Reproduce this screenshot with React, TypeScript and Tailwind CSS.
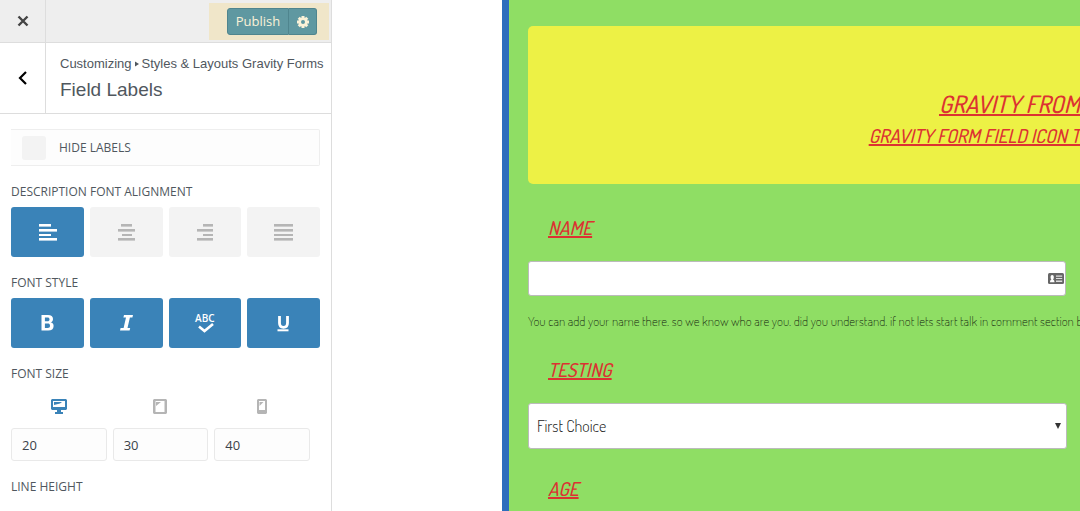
import React from "react";

const narrow = "font-['Dosis','Roboto_Condensed','Open_Sans_Condensed','Noto_Sans_Condensed',Lato,sans-serif]";

function AlignIcon({ rows }: { rows: [number, number][] }) {
  return (
    <svg width="20" height="18" viewBox="0 0 20 18" fill="currentColor" aria-hidden="true">
      {rows.map(([x, w], i) => (
        <rect key={i} x={x} y={[1, 6, 11, 15][i]} width={w} height={i === 2 ? 2 : 2.6} />
      ))}
    </svg>
  );
}

const alignments: { name: string; rows: [number, number][] }[] = [
  { name: "Left", rows: [[2, 12], [2, 18], [2, 12], [2, 18]] },
  { name: "Center", rows: [[5, 11], [2, 17], [6, 10], [2, 17]] },
  { name: "Right", rows: [[8, 10], [2, 16], [8, 10], [2, 16]] },
  { name: "Justify", rows: [[0, 19], [0, 19], [0, 19], [0, 19]] },
];

function BoldIcon() {
  return (
    <svg width="20" height="20" viewBox="0 0 20 20" fill="currentColor" fillRule="evenodd" aria-hidden="true">
      <path d="M4.500 2H11c3.200 0 5 1.400 5 3.900 0 1.800-.9 2.900-2.400 3.400 1.900.4 3 1.700 3 3.700 0 3-2 4.600-5.400 4.600H4.500zm3.400 2.600v3.600h2.500c1.400 0 2.100-.6 2.100-1.800s-.7-1.800-2.200-1.800zm0 6v4.300h2.800c1.500 0 2.300-.7 2.300-2.200s-.8-2.100-2.400-2.100z" />
    </svg>
  );
}

function ItalicIcon() {
  return (
    <svg width="20" height="20" viewBox="0 0 20 20" fill="currentColor" aria-hidden="true">
      <path d="M8 2h9l-.6 2.600h-2.500L11.500 15h2.700l-.6 2.600H4L4.600 15h3L10 4.600H7.400z" />
    </svg>
  );
}

function SpellIcon() {
  return (
    <span className="flex flex-col items-center">
      <span className="text-[10px] leading-[10px] font-semibold">ABC</span>
      <svg width="18" height="10" viewBox="0 0 18 10" fill="none" stroke="currentColor" strokeWidth="2.600" aria-hidden="true">
        <path d="M3 3.500l5.500 4.500L17 1" />
      </svg>
    </span>
  );
}

function UnderlineIcon() {
  return (
    <svg width="20" height="20" viewBox="0 0 20 20" aria-hidden="true">
      <path d="M5.500 3v7c0 3 1.300 4.300 4 4.300s4-1.300 4-4.300V3" fill="none" stroke="currentColor" strokeWidth="2.800" />
      <path d="M3.500 16.300h11v2h-11z" fill="currentColor" />
    </svg>
  );
}

function DesktopIcon() {
  return (
    <svg width="16" height="15" viewBox="0 0 16 15" fill="currentColor" aria-hidden="true">
      <path fillRule="evenodd" d="M1 0h14l1 1v9l-1 1h-5v2h2v2H4v-2h2v-2H1l-1-1V1zM2 2v6h12V2z" />
      <path d="M3 3h8L9 4.500 3 6z" />
    </svg>
  );
}

function TabletIcon() {
  return (
    <svg width="14" height="15" viewBox="0 0 14 15" fill="currentColor" aria-hidden="true">
      <path fillRule="evenodd" d="M1 0h12l1 1v13l-1 1H1l-1-1V1zM2.500 2v11h9V2z" />
      <path d="M3 3h5L3 7z" />
    </svg>
  );
}

function PhoneIcon() {
  return (
    <svg width="10" height="15" viewBox="0 0 10 15" fill="currentColor" aria-hidden="true">
      <path fillRule="evenodd" d="M1 0h8l1 1v13l-1 1H1l-1-1V1zM2 2v9h6V2z" />
      <path d="M2.500 3h4l-4 4z" />
    </svg>
  );
}

function GearIcon() {
  return (
    <svg width="14" height="14" viewBox="0 0 14 14" aria-hidden="true">
      <g fill="currentColor">
        {[0, 45, 90, 135].map((a) => (
          <rect key={a} x="5.500" y="1" width="3" height="12" transform={`rotate(${a} 7 7)`} />
        ))}
        <circle cx="7" cy="7" r="4.600" />
      </g>
      <circle cx="7" cy="7" r="2" className="fill-[#5f98a1]" />
    </svg>
  );
}

function CardIcon() {
  return (
    <svg width="16" height="11" viewBox="0 0 16 11" aria-hidden="true">
      <rect width="16" height="11" rx="1.500" fill="#666" />
      <path d="M2 9.200c0-1.600.8-2.400 1.500-2.600C2.700 6 2.600 5 2.600 4c0-1.200.6-2 1.600-2s1.600.8 1.600 2c0 1-.1 2-.9 2.600.8.2 1.600 1 1.600 2.600z" fill="#fff" />
      <path d="M8 2.500h6.200v1.300H8zM8 5.100h6.200v1H8zM8 7.600h6.200v1.300H8z" fill="#ddd" />
    </svg>
  );
}

const styles = [
  { name: "Bold", icon: <BoldIcon /> },
  { name: "Italic", icon: <ItalicIcon /> },
  { name: "Spelling", icon: <SpellIcon /> },
  { name: "Underline", icon: <UnderlineIcon /> },
];

const sizes = [
  { name: "Desktop", value: "20", icon: <DesktopIcon />, color: "text-[#3a83b8]" },
  { name: "Tablet", value: "30", icon: <TabletIcon />, color: "text-[#b5b5b5]" },
  { name: "Mobile", value: "40", icon: <PhoneIcon />, color: "text-[#b5b5b5]" },
];

function Heading({ children }: { children: React.ReactNode }) {
  return <h3 className="mt-[18px] text-xs leading-4 text-[#50575e]">{children}</h3>;
}

function Sidebar() {
  return (
    <aside className="w-[332px] shrink-0 border-r border-[#ddd] bg-white font-['Open_Sans',sans-serif]">
      <div className="flex h-[43px] border-b border-[#ddd] bg-[#eee]">
        <button aria-label="Close" className="flex w-[46px] items-center justify-center border-r border-[#ddd] text-[#444]">
          <svg width="12" height="12" viewBox="0 0 12 12" stroke="currentColor" strokeWidth="2.400" aria-hidden="true">
            <path d="M1.500 1.500l9 9M10.500 1.500l-9 9" />
          </svg>
        </button>
        <div className="mt-[3px] mr-[2px] mb-[2px] ml-auto flex items-center bg-[#f0e6c9] pr-3 pl-[18px] text-[#fbf2d8]">
          <button className="h-[27px] w-[62px] rounded-l-[3px] border border-[#4f858e] bg-[#5f98a1] text-[13px]">Publish</button>
          <button aria-label="Publish settings" className="flex h-[27px] w-7 items-center justify-center rounded-r-[3px] border border-l-0 border-[#4f858e] bg-[#5f98a1]">
            <GearIcon />
          </button>
        </div>
      </div>

      <div className="flex h-[71px] border-b border-[#ddd] font-['Liberation_Sans',sans-serif] text-[#50575e]">
        <button aria-label="Back" className="flex w-[46px] shrink-0 items-center justify-center border-r border-[#ddd] text-black">
          <svg width="10" height="14" viewBox="0 0 10 14" fill="none" stroke="currentColor" strokeWidth="2.200" aria-hidden="true">
            <path d="M8 1L2 7l6 6" />
          </svg>
        </button>
        <div className="flex-1 pt-3 pl-[14px]">
          <div className="flex items-center text-[13px] leading-[18px] whitespace-nowrap">
            Customizing
            <svg width="10" height="6" viewBox="0 0 10 6" fill="currentColor" aria-hidden="true">
              <path d="M3 .5L7 3 3 5.500z" />
            </svg>
            Styles &amp; Layouts Gravity Forms
          </div>
          <h2 className="mt-1 text-[19px] leading-[26px]">Field Labels</h2>
        </div>
      </div>

      <div className="px-[11px] pt-[15px]">
        <label className="flex h-[37px] items-center rounded-r-[2px] border border-l-0 border-[#eee] bg-[#fdfdfd] pl-[11px] text-xs text-[#50575e]">
          <input type="checkbox" className="mr-[13px] size-6 appearance-none rounded-[3px] bg-[#f3f3f3]" />
          HIDE LABELS
        </label>

        <Heading>DESCRIPTION FONT ALIGNMENT</Heading>
        <div className="mt-[7px] grid grid-cols-4 gap-[6px]">
          {alignments.map((a, i) => (
            <button
              key={a.name}
              aria-label={a.name}
              className={
                i === 0
                  ? "flex h-[50px] items-center justify-center rounded-[3px] bg-[#3a83b8] text-white"
                  : "flex h-[50px] items-center justify-center rounded-[3px] bg-[#f3f3f3] text-[#b5b5b5]"
              }
            >
              <AlignIcon rows={a.rows} />
            </button>
          ))}
        </div>

        <Heading>FONT STYLE</Heading>
        <div className="mt-[7px] grid grid-cols-4 gap-[6px]">
          {styles.map((s) => (
            <button key={s.name} aria-label={s.name} className="flex h-[50px] items-center justify-center rounded-[3px] bg-[#3a83b8] text-white">
              {s.icon}
            </button>
          ))}
        </div>

        <Heading>FONT SIZE</Heading>
        <div className="mt-[17px] mr-[10px] grid grid-cols-3 gap-[6px]">
          {sizes.map((s) => (
            <label key={s.name} aria-label={s.name} className={`flex flex-col items-center gap-[14px] ${s.color}`}>
              {s.icon}
              <input
                type="text"
                defaultValue={s.value}
                className="h-[33px] w-full rounded-[3px] border border-[#e9e9e9] bg-[#fdfdfd] px-[10px] text-[13px] text-[#3c434a]"
              />
            </label>
          ))}
        </div>

        <Heading>LINE HEIGHT</Heading>
      </div>
    </aside>
  );
}

const fieldLabel = "ml-5 block text-[19px] leading-6 font-medium text-[#dc3232] italic underline decoration-2 underline-offset-1";

function Preview() {
  return (
    <main className={`min-w-0 flex-1 overflow-hidden border-l-[7px] border-[#2d6dbd] bg-[#8fde64] pt-[26px] pl-[19px] ${narrow}`}>
      <header className="flex h-[158px] flex-col items-end rounded-l-[5px] bg-[#edf145] pt-[62px] font-medium whitespace-nowrap text-[#dc3232] italic">
        <h1 className="text-2xl leading-8 underline decoration-2 underline-offset-1">GRAVITY FROM</h1>
        <h2 className="text-[19px] leading-8 underline decoration-2 underline-offset-1">GRAVITY FORM FIELD ICON T</h2>
      </header>

      <form>
        <div className="pt-8">
          <label htmlFor="name" className={fieldLabel}>NAME</label>
          <div className="relative mt-[21px] mr-[14px]">
            <input id="name" type="text" className="block h-[35px] w-full rounded-[3px] border border-[#bbb] bg-white pr-6 pl-2" />
            <span className="absolute top-3 right-[2px]">
              <CardIcon />
            </span>
          </div>
          <p className="mt-4 text-[13px] leading-[18px] font-extralight whitespace-nowrap text-[#0f180c]">
            You can add your name there. so we know who are you. did you understand. if not lets start talk in comment section b
          </p>
        </div>

        <div className="pt-7">
          <label htmlFor="testing" className={fieldLabel}>TESTING</label>
          <div className="relative mt-[21px] mr-[13px]">
            <select id="testing" className="block h-[46px] w-full appearance-none rounded-[3px] border border-[#bbb] bg-white px-2 text-base font-light text-[#222]">
              <option>First Choice</option>
            </select>
            <svg width="6" height="6" viewBox="0 0 6 6" className="pointer-events-none absolute top-5 right-[6px] fill-[#333]" aria-hidden="true">
              <path d="M0 0h6L3 6z" />
            </svg>
          </div>
        </div>

        <div className="pt-7">
          <span className={fieldLabel}>AGE</span>
        </div>
      </form>
    </main>
  );
}

export default function App() {
  return (
    <div className="flex h-screen overflow-hidden bg-white">
      <Sidebar />
      <div className="w-[170px] shrink-0" />
      <Preview />
    </div>
  );
}
